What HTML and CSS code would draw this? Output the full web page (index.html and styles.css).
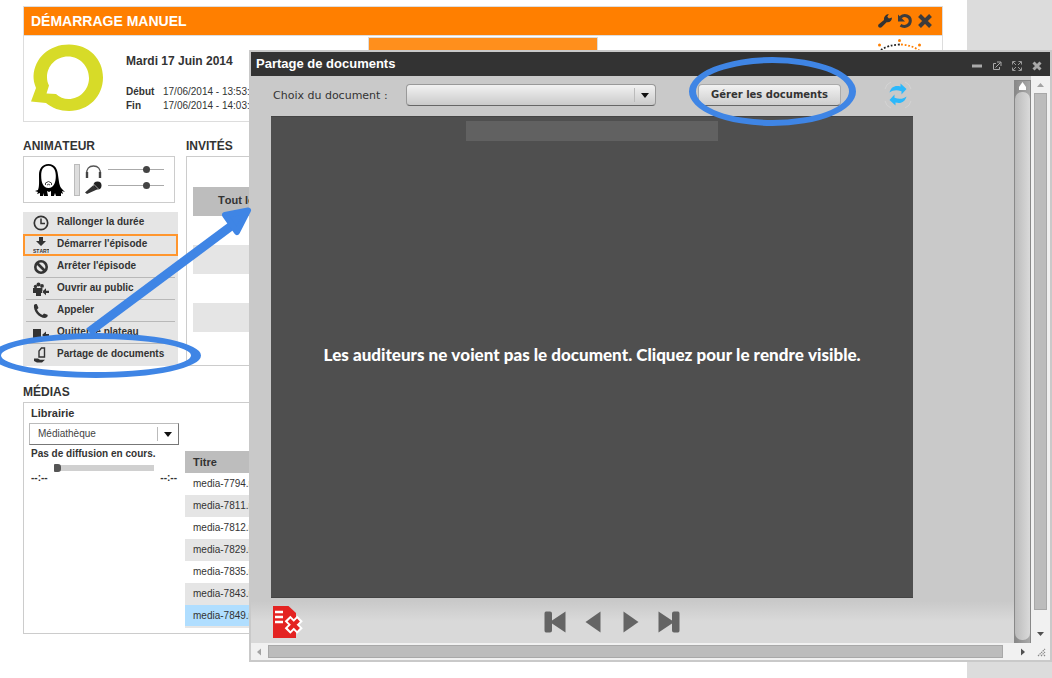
FILE: index.html
```html
<!DOCTYPE html>
<html lang="fr">
<head>
<meta charset="utf-8">
<title>Démarrage manuel</title>
<link rel="stylesheet" href="styles.css">
</head>
<body>
<main class="page">
  <header class="show">
    <div class="show-bar">
      <h1 class="show-title">DÉMARRAGE MANUEL</h1>
      <div class="show-tools">
        <button class="tool" aria-label="Réglages"><svg width="14" height="14" viewBox="0 0 14 14"><path d="M.5 10.500 6 6C5.500 3 7.500.3 10.800 0L9.300 2.800l1.600 1.700L14 3.500C14 7 11.500 8.800 8.600 8.200L3.600 13.200C1.600 14.600-.8 12.600.5 10.500z" fill="#333"/></svg></button>
        <button class="tool" aria-label="Actualiser"><svg width="14" height="14" viewBox="0 0 14 14"><path d="M2.500 3.400C6.500-.2 12.500 2 12.300 7 12 12 6.500 13.800 2.500 11.300" fill="none" stroke="#3c3c3c" stroke-width="3"/><path d="M0 .5v7h7z" fill="#3c3c3c"/></svg></button>
        <button class="tool" aria-label="Fermer"><svg width="14" height="14" viewBox="0 0 14 14"><path d="M1.500 1.500l11 11M12.500 1.500l-11 11" stroke="#3c3c3c" stroke-width="4"/></svg></button>
      </div>
    </div>
    <div class="show-body">
      <div class="show-info">
        <svg class="bubble" width="72" height="68" viewBox="0 0 72 68"><path fill-rule="evenodd" fill="#d7db28" d="M38 0.500C58 .5 72 15 72 33.500S58 67 38 67C29 67 21 64 15 59L0 57.500 5 44C3 39 2.500 36 2.500 32 3.500 14 18 .5 38 .5zM37 12.500C25 12.500 16 22 16 33c0 3 .6 6 2 8.500L15.500 49.500l9.500.5c3 3 8 5 12.500 5C49 55 58 45.500 58 34S49 12.500 37 12.500z"/></svg>
        <div class="show-dates">
          <p class="show-day">Mardi 17 Juin 2014</p>
          <dl class="times">
            <dt>Début</dt><dd>17/06/2014 - 13:53:00</dd>
            <dt>Fin</dt><dd>17/06/2014 - 14:03:00</dd>
          </dl>
        </div>
      </div>
      <div class="show-tab"></div>
      <svg class="dots" width="44" height="14" viewBox="0 0 44 14"><g fill="#ff7f00"><circle cx="1.500" cy="6" r="1.500"/><circle cx="21.500" cy="1.500" r="1.500"/><circle cx="41.500" cy="6" r="1.500"/></g><path d="M3 11Q10 6 22 5.500" fill="none" stroke="#222" stroke-width="1.800" stroke-dasharray="1.800 1.800"/><path d="M23 5.500Q34 6 42 12" fill="none" stroke="#ff7f00" stroke-width="1.800" stroke-dasharray="1.800 1.800"/></svg>
    </div>
  </header>

  <div class="columns">
    <section class="host">
      <h2 class="heading">ANIMATEUR</h2>
      <div class="host-card">
        <svg width="30" height="34" viewBox="0 0 30 34"><path fill-rule="evenodd" fill="#000" d="M13.500 1C7 1 4 6 4 12 4 19 4.500 23 3 27L0 28l3 1-1 2 3-1v3h3l1-3v3h4l-1-5 2 1 2-1v5h3l1-3 1 3h5v-3l2 1-1-3 3 1-3-3C24 23 24 18 23 12 22.500 6 20 1 13.500 1zM13.500 2.800C19 2.800 20.800 8 20.800 13c0 6-1.800 12-7.300 12S6.200 19 6.200 13 8 2.800 13.500 2.800z"/><path d="M10.500 22v-2q3-3 6 0v2M12 22q1.500-1.500 3 0" fill="none" stroke="#444"/></svg>
        <span class="meter"></span>
        <div class="mix">
          <svg width="17" height="14" viewBox="0 0 17 14"><path d="M2 9C1 4 4 1 8.500 1S16 4 15 9" fill="none" stroke="#555" stroke-width="1.300"/><path d="M2 7v6M15 7v6" stroke="#444" stroke-width="2.400"/></svg>
          <input class="volume" type="range" min="0" max="100" value="71" aria-label="Casque">
          <svg width="17" height="14" viewBox="0 0 17 14"><circle cx="12.500" cy="4.500" r="4" fill="#222"/><path d="M8 4.500 12 8.500 2 13 0 11.500z" fill="#333"/><path d="M8.500 3 13.500 8" stroke="#fff" stroke-width=".6"/></svg>
          <input class="volume" type="range" min="0" max="100" value="71" aria-label="Micro">
        </div>
      </div>
      <nav class="menu">
        <button class="item plain"><svg class="ico" viewBox="0 0 16 16"><circle cx="8" cy="8" r="6.700" fill="none" stroke="#333" stroke-width="1.700"/><path d="M8 3.500V8.500h4" fill="none" stroke="#333" stroke-width="1.500"/></svg><span>Rallonger la durée</span></button>
        <button class="item active"><svg class="ico" viewBox="0 0 16 16"><path d="M6 0h4v4h3L8 9 3 4h3z" fill="#333"/><text class="start" x="0" y="16">START</text></svg><span>Démarrer l'épisode</span></button>
        <button class="item"><svg class="ico" viewBox="0 0 16 16"><circle cx="8" cy="8" r="5.700" fill="none" stroke="#333" stroke-width="2.600"/><path d="M4 4l8 8" stroke="#333" stroke-width="2.600"/></svg><span>Arrêter l'épisode</span></button>
        <button class="item"><svg class="ico" viewBox="0 0 16 16"><g fill="#333"><circle cx="2.500" cy="5.500" r="1.700"/><circle cx="5.500" cy="3.500" r="2"/><circle cx="9" cy="5" r="1.900"/><path d="M0 7h10v5H8v3H3v-3H0zM16 9.700h-3V7.200L9 10.700l4 3.500v-2.300h3z"/></g><path d="M9.500 6.500v8" stroke="#e5e5e5" stroke-width=".6"/></svg><span>Ouvrir au public</span></button>
        <button class="item"><svg class="ico" viewBox="0 0 16 16"><path d="M1 2C2 .8 3.500.8 4 1.500L5.500 5 4 6.500C5 9 7 11 9.500 12L11 10.500l3.500 1.200c.8 1-.5 3-2.500 3.300C6 15 0 8 1 2z" fill="#333"/></svg><span>Appeler</span></button>
        <button class="item"><svg class="ico" viewBox="0 0 16 16"><path d="M0 4h8v10H0zM16 9h-3V6.500L9 10l4 3.500V11h3z" fill="#333"/></svg><span>Quitter le plateau</span></button>
        <button class="item plain"><svg class="ico" viewBox="0 0 16 16"><path d="M6 10V4L8.500 1H11.500v9z" fill="none" stroke="#333" stroke-width="1.400"/><path d="M1 11.500h4l2 1.200h5l-3 2.800H4l-3-1.500z" fill="#333"/></svg><span>Partage de documents</span></button>
      </nav>
    </section>

    <section class="guests">
      <h2 class="heading">INVITÉS</h2>
      <div class="guests-card">
        <div class="guests-bar">Tout le monde</div>
        <div class="guest"></div><div class="guest odd"></div>
        <div class="guest"></div><div class="guest odd"></div>
      </div>
    </section>
  </div>

  <section class="medias">
    <h2 class="heading">MÉDIAS</h2>
    <div class="medias-card">
      <div class="player">
        <label class="label" for="lib">Librairie</label>
        <div class="select-wrap lib-wrap">
          <select class="lib" id="lib"><option>Médiathèque</option></select>
        </div>
        <p class="status">Pas de diffusion en cours.</p>
        <input class="seek" type="range" min="0" max="100" value="0" aria-label="Position">
        <div class="clock"><span>--:--</span><span>--:--</span></div>
      </div>
      <table class="list">
        <thead><tr><th>Titre</th></tr></thead>
        <tbody>
          <tr><td>media-7794.mp3</td></tr>
          <tr><td>media-7811.mp3</td></tr>
          <tr><td>media-7812.mp3</td></tr>
          <tr><td>media-7829.mp3</td></tr>
          <tr><td>media-7835.mp3</td></tr>
          <tr><td>media-7843.mp3</td></tr>
          <tr class="selected"><td>media-7849.mp3</td></tr>
        </tbody>
      </table>
    </div>
  </section>
</main>

<section class="window" aria-label="Partage de documents">
  <div class="titlebar">
    <h2 class="window-title">Partage de documents</h2>
    <div class="controls">
      <button class="ctl" aria-label="Réduire"><svg width="10" height="10" viewBox="0 0 10 10"><path d="M0 5h10" stroke="#aaa" stroke-width="3"/></svg></button>
      <button class="ctl" aria-label="Détacher"><svg width="10" height="10" viewBox="0 0 10 10"><path d="M4 2.500H1.500v6h6V6M3.500 6.500 8.500 1.500M5 1h4v4" fill="none" stroke="#aaa"/></svg></button>
      <button class="ctl" aria-label="Agrandir"><svg width="10" height="10" viewBox="0 0 10 10"><path d="M.5 3.500v-3h3M6.500.5h3v3M9.500 6.500v3h-3M3.500 9.500h-3v-3M1 1l3 3M9 1 6 4M9 9 6 6M1 9l3-3" fill="none" stroke="#999"/></svg></button>
      <button class="ctl" aria-label="Fermer"><svg width="10" height="10" viewBox="0 0 10 10"><path d="M1.500 1.500l7 7M8.500 1.500l-7 7" stroke="#aaa" stroke-width="3"/></svg></button>
    </div>
  </div>
  <div class="window-main">
    <div class="sharing">
      <div class="toolbar">
        <label class="choice" for="doc">Choix du document :</label>
        <div class="select-wrap doc-wrap"><select class="doc" id="doc"><option></option></select></div>
        <button class="manage">Gérer les documents</button>
        <button class="refresh" aria-label="Rafraîchir"><svg width="28" height="28" viewBox="0 0 28 28"><path d="M1 8Q2 3 7 1M21 1q5 2 6 7M27 20q-1 5-6 7M7 27Q2 25 1 20" fill="none" stroke="#d4d4d4"/><g fill="#2cb8fb"><path d="M5.500 11.500C7 6 11 4 16.500 5.500L16.500 2.500 22.500 8 17.500 13.500 17.500 10.200C12.500 8.500 9 9 5.500 11.500z"/><path d="M22.500 15.500C21 21 17 23 11.500 21.500L11.500 24.500 5.500 19 10.500 13.500 10.500 16.800C15.500 18.500 19 18 22.500 15.500z"/></g></svg></button>
      </div>
      <div class="stage">
        <div class="stage-strip"></div>
        <p class="notice">Les auditeurs ne voient pas le document. Cliquez pour le rendre visible.</p>
      </div>
      <div class="pager">
        <button class="remove" aria-label="Retirer le document"><svg width="30" height="33" viewBox="0 0 30 33"><path d="M0 0h15.500L23 7v25H0z" fill="#e42322"/><path d="M2 6h8M2 11h8M2 16h8" stroke="#fff" stroke-width="2.500"/><path d="M14.500 12.500 27 25M27 12.500 14.500 25" stroke="#fff" stroke-width="8"/><path d="M16 14l9.500 9.500M25.500 14 16 23.500" stroke="#e42322" stroke-width="4"/></svg></button>
        <div class="pages">
          <div class="pages-side">
            <button class="nav" aria-label="Première page"><svg width="22" height="22" viewBox="0 0 22 22"><path d="M2 .5h4q2 0 2 2v7L21.500.5v21L8 12.500v7q0 2-2 2H2q-1.500 0-1.500-2v-17q0-2 1.500-2z" fill="#646464"/></svg></button>
            <button class="nav" aria-label="Page précédente"><svg width="16" height="22" viewBox="0 0 16 22"><path d="M15.500.5v21L.5 11z" fill="#646464"/></svg></button>
          </div>
          <div class="pages-side">
            <button class="nav" aria-label="Page suivante"><svg width="16" height="22" viewBox="0 0 16 22"><path d="M.5.500v21L15.500 11z" fill="#646464"/></svg></button>
            <button class="nav" aria-label="Dernière page"><svg width="22" height="22" viewBox="0 0 22 22"><path d="M20 .5h-4q-2 0-2 2v7L.5.500v21L14 12.500v7q0 2 2 2h4q1.500 0 1.500-2v-17q0-2-1.500-2z" fill="#646464"/></svg></button>
          </div>
        </div>
      </div>
    </div>
    <div class="inner-scroll">
      <svg width="15" height="11" viewBox="0 0 15 11"><path d="M7.500 1 11 6v3H4V6z" fill="#fff"/></svg>
      <div class="inner-thumb"></div>
    </div>
    <div class="outer-scroll">
      <svg width="17" height="16" viewBox="0 0 17 16"><path d="M8.500 7 12 11H5z" fill="#a3a3a3"/></svg>
      <div class="outer-thumb"></div>
      <svg class="down" width="17" height="16" viewBox="0 0 17 16"><path d="M5 5h7L8.500 9z" fill="#505050"/></svg>
    </div>
  </div>
  <div class="bottom-scroll">
    <svg width="17" height="16" viewBox="0 0 17 16"><path d="M10 4.500v7L6 8z" fill="#a3a3a3"/></svg>
    <div class="bottom-thumb"></div>
    <svg class="right" width="29" height="16" viewBox="0 0 29 16"><path d="M18 4.500v7L22 8z" fill="#505050"/></svg>
    <svg width="18" height="16" viewBox="0 0 18 16"><path d="M6 12l7-7M9 12l4-4M12 12l1-1" stroke="#888" stroke-width="1.200" stroke-dasharray="1.500 .7"/></svg>
  </div>
</section>

<svg class="marks" width="860" height="400" viewBox="0 0 860 400" aria-hidden="true">
  <g fill="#3f85e5" fill-rule="evenodd">
    <path d="M-9 355.500a105 22.500 0 0 1 210 0a105 22.500 0 0 1-210 0zM1 355.500a95 16.500 0 0 0 190 0a95 16.500 0 0 0-190 0z"/>
    <path d="M689 91.500a83.500 34.500 0 0 1 167 0a83.500 34.500 0 0 1-167 0zM696 91.500a76.500 28.500 0 0 0 153 0a76.500 28.500 0 0 0-153 0z"/>
  </g>
  <path d="M89 332 234 224" stroke="#3f85e5" stroke-width="9"/>
  <path d="M248 210.500 225 215 237 232z" fill="#3f85e5" stroke="#3f85e5" stroke-width="6" stroke-linejoin="round"/>
</svg>
</body>
</html>
```
FILE: styles.css
```css
* { box-sizing: border-box; }
html, body { margin: 0; height: 100%; }
body {
  position: relative;
  overflow: hidden;
  padding-right: 85px;
  background: #dcdcdc;
  color: #333;
  font-family: "Liberation Sans", Arial, sans-serif;
  font-size: 10px;
  font-kerning: none;
}
h1, h2, p, dl, dd { margin: 0; }
button { padding: 0; border: 0; background: none; color: inherit; font: inherit; cursor: pointer; }
svg { display: block; flex: none; }

.page { min-height: 100%; padding: 6px 24px 0 23px; background: #fff; }

.show { border: 1px solid #ddd; }
.show-bar {
  display: flex; align-items: center; justify-content: space-between;
  height: 29px; padding: 0 10px 0 7px;
  border-bottom: 1px solid #ddd;
  background: #ff7f00;
}
.show-title { color: #fff; font-size: 14px; line-height: 30px; }
.show-tools { display: flex; gap: 6px; }
.show-body { display: grid; grid-template-columns: 1fr 230px 1fr; height: 85px; }
.show-info { display: flex; gap: 23px; padding: 8px 0 0 7px; }
.show-dates { padding-top: 9px; white-space: nowrap; }
.show-day { font-size: 12px; font-weight: bold; line-height: 16px; }
.times { display: grid; grid-template-columns: 37px auto; padding-top: 16px; line-height: 14px; }
.times dt { font-weight: bold; }
.show-tab { margin-top: 1px; border: 1px solid #ddd; border-bottom: 0; background: #ff8f1c; }
.dots { justify-self: end; margin: 3px 20px 0 0; }

.heading { margin-bottom: 2px; font-size: 12px; line-height: 16px; }
.columns { display: grid; grid-template-columns: 155px 1fr; gap: 8px; padding-top: 16px; }
.host-card {
  display: flex; align-items: center; gap: 9px;
  height: 47px; margin: 0 3px 9px 0; padding-left: 11px;
  border: 1px solid #ccc;
}
.meter { width: 6px; height: 32px; border: 1px solid #bbb; background: #ddd; }
.mix { display: grid; grid-template-columns: 17px 56px; gap: 2px 6px; align-items: center; margin-left: -4px; }

.volume, .seek { appearance: none; width: 100%; margin: 0; background: none; }
.volume { height: 10px; margin-bottom: 4px; }
.volume::-webkit-slider-runnable-track { height: 1px; background: #aaa; }
.volume::-webkit-slider-thumb {
  appearance: none; width: 7px; height: 7px; margin-top: -3px;
  border-radius: 50%; background: #444;
}

.menu { background: #e5e5e5; }
.item {
  display: flex; align-items: center; gap: 8px;
  width: 100%; height: 22px; padding: 0 3px 0 10px;
  background: linear-gradient(#b8b8b8, #b8b8b8) 3px 100% / 149px 1px no-repeat;
  font-weight: bold; line-height: 12px; text-align: left; white-space: nowrap;
}
.item span { padding-bottom: 2px; }
.item.plain { background: none; }
.item.active { padding-left: 8px; border: 2px solid #ff962e; background: none; }
.ico { width: 16px; height: 16px; }
.start { fill: #333; font-size: 5px; font-weight: bold; }

.guests-card { height: 210px; padding: 30px 6px 0; border: 1px solid #ccc; }
.guests-bar {
  height: 29px; padding-left: 25px;
  background: #bdbdbd; font-size: 11px; font-weight: bold; line-height: 27px;
}
.guest { height: 29px; }
.guest.odd { background: #e5e5e5; }

.medias { padding-top: 18px; }
.medias-card { display: grid; grid-template-columns: 161px 1fr; height: 232px; border: 1px solid #ccc; }
.player { padding: 2px 6px 0 5px; }
.label { display: block; padding-left: 2px; font-size: 11px; font-weight: bold; line-height: 16px; }
.select-wrap { position: relative; }
.select-wrap::before, .select-wrap::after { content: ""; position: absolute; pointer-events: none; }
.select-wrap::before { top: 4px; right: 21px; width: 1px; height: 14px; background: #bbb; }
.select-wrap::after {
  top: 9px; right: 7px;
  border: 4px solid transparent; border-top: 5px solid #111; border-bottom: 0;
}
select { display: block; appearance: none; width: 100%; height: 22px; color: #444; font: inherit; }
.lib-wrap { margin-top: 2px; }
.lib {
  padding: 0 8px 2px; border: 1px solid #bbb; border-bottom-color: #777;
  border-right-color: #777; border-radius: 0; background: #fff;
}
.status { padding: 2px 0 0 2px; font-weight: bold; line-height: 14px; white-space: nowrap; }
.seek { display: block; width: 100px; height: 8px; margin: 3px 0 0 25px; }
.seek::-webkit-slider-runnable-track { height: 6px; background: #d0d0d0; }
.seek::-webkit-slider-thumb {
  appearance: none; width: 7px; height: 8px; margin-top: -1px;
  border-radius: 1px 3px 3px 1px; background: #555;
}
.clock { display: flex; justify-content: space-between; padding: 0 2px; line-height: 12px; font-weight: bold; }

.list { align-self: start; margin: 48px 6px 0 0; border-collapse: collapse; border-bottom: 2px solid #e5e5e5; }
.list th, .list td { height: 22px; padding: 0 0 0 8px; text-align: left; }
.list td { padding-bottom: 1px; }
.list th { background: #bdbdbd; font-size: 11px; }
.list tbody tr:nth-child(even) { background: #e5e5e5; }
.list tbody tr.selected { background: #b0deff; }

.window {
  position: absolute; top: 50px; left: 249px; right: 0;
  border: 2px solid #c9c9c9;
  background: #c9c9c9;
}
.titlebar {
  display: flex; align-items: center; justify-content: space-between;
  height: 24px; padding: 0 8px 0 5px;
  background: #333; color: #fff;
}
.window-title { font-size: 13px; line-height: 26px; }
.controls { display: flex; gap: 10px; padding-top: 3px; }
.window-main { display: flex; height: 567px; }
.sharing {
  flex: 1; min-width: 0; padding-left: 20px;
  background: linear-gradient(#c9c9c9 525px, #d9d9d9 545px);
}
.toolbar { display: flex; align-items: center; height: 40px; padding: 0 0 2px 2px; }
.choice {
  width: 133px;
  font-family: "DejaVu Sans", Verdana, sans-serif; font-size: 11px;
}
.doc-wrap { flex: 0 1 250px; }
.doc {
  border: 1px solid #999; border-bottom-color: #666; border-radius: 4px;
  background: linear-gradient(#f2f2f2, #cacaca);
}
.manage {
  width: 143px; height: 22px; margin-left: 42px;
  border: 1px solid #aaa; border-bottom-color: #666; border-radius: 4px;
  background: linear-gradient(#f2f2f2, #cecece);
  font-family: "DejaVu Sans", Verdana, sans-serif; font-size: 10px; font-weight: bold;
  line-height: 18px; white-space: nowrap;
}
.refresh { margin-left: 43px; }
.stage {
  display: flex; flex-direction: column; align-items: center;
  height: 482px; margin-right: 101px; padding-top: 4px;
  border: solid #444; border-width: 1px 0;
  background: #4f4f4f;
}
.stage-strip { flex: none; width: 252px; height: 20px; background: #616161; }
.notice {
  padding-top: 202px; color: #fff; white-space: nowrap;
  font-family: Lato, "Open Sans", sans-serif; font-size: 17px; font-weight: 900; line-height: 24px;
}
.pager { display: grid; grid-template-columns: 1fr auto 1fr; margin-right: 101px; padding: 8px 0 0 2px; }
.remove { justify-self: start; }
.pages { display: flex; align-items: flex-start; gap: 22px; padding: 5px 0 0 38px; }
.pages-side { display: flex; gap: 19px; }

.inner-scroll {
  display: flex; flex-direction: column;
  width: 17px; margin-top: 4px;
  border: 1px solid #888; border-bottom: 0;
  background: linear-gradient(90deg, #888, #aaa);
}
.inner-thumb {
  flex: 1; margin-bottom: 3px;
  border-radius: 7px;
  background: linear-gradient(90deg, #bbb, #dadada);
}
.outer-scroll {
  display: flex; flex-direction: column;
  width: 19px; padding-left: 1px;
  background: #f1f1f1;
}
.outer-thumb { flex: 1; width: 13px; margin: 1px 0 17px 2px; border: 1px solid #a8a8a8; background: #bcbcbc; }
.bottom-scroll { display: flex; align-items: center; height: 17px; background: #f1f1f1; }
.bottom-thumb { flex: 1; height: 13px; border: 1px solid #a8a8a8; background: #bcbcbc; }

.marks { position: absolute; top: 0; left: 0; pointer-events: none; }
```
